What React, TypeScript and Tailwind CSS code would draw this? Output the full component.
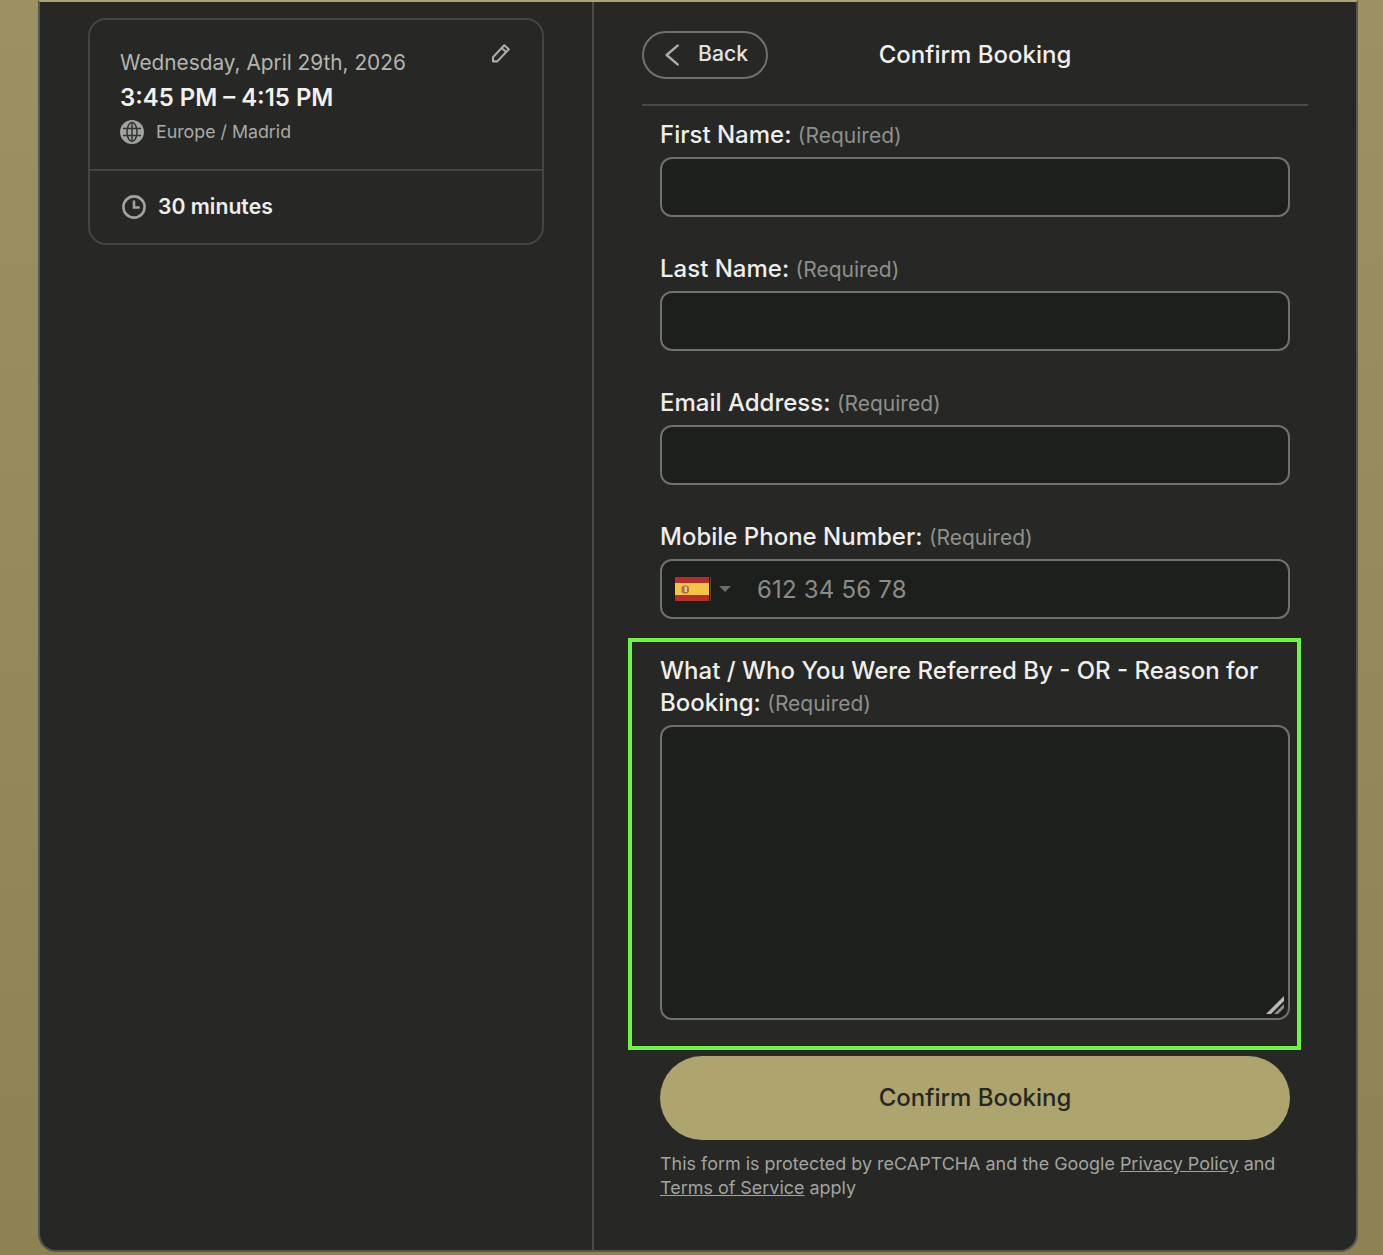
import React from 'react';

const inputClass = "block w-full h-[60px] rounded-[12px] border-2 border-[#6f716c] bg-[#1d1f1c]";

const Field: React.FC<{ label: string }> = ({ label }) => (
  <div className="h-[134px]">
    <div className="h-[52px] pt-[15px] text-[24px] leading-[30px] font-[550] text-[#eeeeec]">
      {label}: <span className="text-[21px] font-normal text-[#8e908b]">(Required)</span>
    </div>
    <div className={inputClass}></div>
  </div>
);

const GlobeIcon = () => (
  <svg viewBox="0 0 24 24" className="w-[24px] h-[24px] shrink-0">
    <circle cx="12" cy="12" r="12" fill="#a1a39e" />
    <g fill="none" stroke="#33342f" strokeWidth="1.5">
      <ellipse cx="12" cy="12" rx="5" ry="9.5" />
      <path d="M3 8.6h18M3 15.4h18M12 2.5v19" />
    </g>
  </svg>
);

const ClockIcon = () => (
  <svg viewBox="0 0 24 24" className="w-[24px] h-[24px] shrink-0" fill="none" stroke="#a1a39e" strokeWidth="2.6" strokeLinecap="round">
    <circle cx="12" cy="12" r="10.6" />
    <path d="M12 6.5v6h4.6" />
  </svg>
);

const PencilIcon = () => (
  <svg viewBox="0 0 20 20" className="w-[20px] h-[20px]" fill="none" stroke="#a9aba6" strokeWidth="2.1" strokeLinejoin="round">
    <path d="M2 14.2 13.2 2.2l4.6 4L6.3 18.4 2 18.4z" />
    <path d="M10.6 5 15.2 9" />
  </svg>
);

const BackChevron = () => (
  <svg viewBox="0 0 14 22" className="w-[14px] h-[22px]" fill="none" stroke="#a9aba6" strokeWidth="2.5" strokeLinecap="round" strokeLinejoin="round">
    <path d="M12.6 1.6 1.6 11l11 9.4" />
  </svg>
);

const SpainFlag = () => (
  <svg viewBox="0 0 34 24" className="w-[34px] h-[24px]">
    <rect width="34" height="24" fill="#b52f2a" />
    <rect y="6" width="34" height="12" fill="#f3c63f" />
    <rect x="6.5" y="8.5" width="7.5" height="8" rx="3" fill="#a9713f" />
    <rect x="9.5" y="9.5" width="2.5" height="5.5" fill="#dcc79a" />
  </svg>
);

const ResizeGrip = () => (
  <svg viewBox="0 0 20 20" className="absolute right-[3px] bottom-[3px] w-[20px] h-[20px]">
    <path d="M1 19 19 1v5L6 19z" fill="#b9bab8" />
    <path d="M9 19 19 9v4l-6 6z" fill="#8e8f8d" />
  </svg>
);

export default function App() {
  return (
    <div className="h-[1255px] overflow-hidden pl-[38px] pr-[25px] font-['Inter',sans-serif] bg-gradient-to-b from-[#9b9163] to-[#8c8253]">
      <div className="flex h-[1252px] rounded-b-[18px] border-x-2 border-b-2 border-[#565650] border-t-2 border-t-[#b0a56f] bg-[#272725] overflow-hidden">
        {/* left column */}
        <div className="w-[554px] shrink-0 border-r-2 border-[#4a4b48] pl-[48px] pt-[16px]">
          <div className="w-[456px] h-[227px] rounded-[18px] border-2 border-[#444542]">
            <div className="relative h-[151px] border-b-2 border-[#444542] pl-[30px] pt-[28px]">
              <div className="text-[20.8px] leading-[30px] text-[#b4b5b1]">Wednesday, April 29th, 2026</div>
              <div className="mt-[4px] text-[23.9px] leading-[32px] font-semibold text-[#f0f0ee]">3:45 PM – 4:15 PM</div>
              <div className="mt-[5px] flex items-center gap-[12px] text-[17.8px] leading-[26px] text-[#a9aba6]">
                <GlobeIcon />
                <span>Europe / Madrid</span>
              </div>
              <div className="absolute top-[23px] right-[31px]"><PencilIcon /></div>
            </div>
            <div className="flex h-[71px] items-center gap-[12px] pl-[32px] text-[21.2px] font-semibold text-[#eeeeec]">
              <ClockIcon />
              <span>30 minutes</span>
            </div>
          </div>
        </div>

        {/* right column */}
        <div className="flex-1 px-[48px]">
          <div className="relative h-[104px] border-b-2 border-[#4a4b48] pt-[29px]">
            <div className="flex h-[48px] w-[126px] items-center rounded-full border-2 border-[#6f716c] pl-[21px] text-[21.2px] font-[550] text-[#e2e3e0]">
              <BackChevron />
              <span className="ml-[19px] -mt-[2px]">Back</span>
            </div>
            <div className="absolute top-[29px] left-0 right-0 h-[48px] flex items-center justify-center text-[24px] font-[550] text-[#f0f0ee]">
              Confirm Booking
            </div>
          </div>

          <div className="-mt-[1px] px-[18px]">
            <Field label="First Name" />
            <Field label="Last Name" />
            <Field label="Email Address" />
            <div>
              <div className="h-[52px] pt-[15px] text-[24px] leading-[30px] font-[550] text-[#eeeeec]">
                Mobile Phone Number: <span className="text-[21px] font-normal text-[#8e908b]">(Required)</span>
              </div>
              <div className={`${inputClass} flex items-center pl-[13px]`}>
                <SpainFlag />
                <span className="ml-[1px] h-[24px] w-[1px] bg-[#5a4a30]"></span>
                <span className="ml-[8px] h-0 w-0 border-x-[6px] border-t-[6px] border-x-transparent border-t-[#6b6d68]"></span>
                <span className="ml-[26px] pt-[2px] text-[24px] tracking-[0.2px] text-[#8a8c87]">612 34 56 78</span>
              </div>
            </div>

            <div className="mt-[19px] -ml-[32px] -mr-[11px] h-[412px] border-[4px] border-[#6cf542] pl-[28px] pr-[7px] pt-[13px]">
              <div className="text-[24px] leading-[32px] font-[550] text-[#eeeeec]">
                What / Who You Were Referred By - OR - Reason for Booking:{' '}
                <span className="text-[21px] font-normal text-[#8e908b]">(Required)</span>
              </div>
              <div className="relative mt-[5px] h-[295px] rounded-[12px] border-2 border-[#6f716c] bg-[#1d1f1c]">
                <ResizeGrip />
              </div>
            </div>

            <div className="mt-[6px] flex h-[84px] items-center justify-center rounded-full bg-[#aea46e] text-[24px] font-[550] text-[#272725]">
              Confirm Booking
            </div>

            <div className="mt-[12px] text-[17.95px] leading-[24px] text-[#a2a49f]">
              This form is protected by reCAPTCHA and the Google <span className="underline">Privacy Policy</span> and{' '}
              <span className="underline">Terms of Service</span> apply
            </div>
          </div>
        </div>
      </div>
    </div>
  );
}
